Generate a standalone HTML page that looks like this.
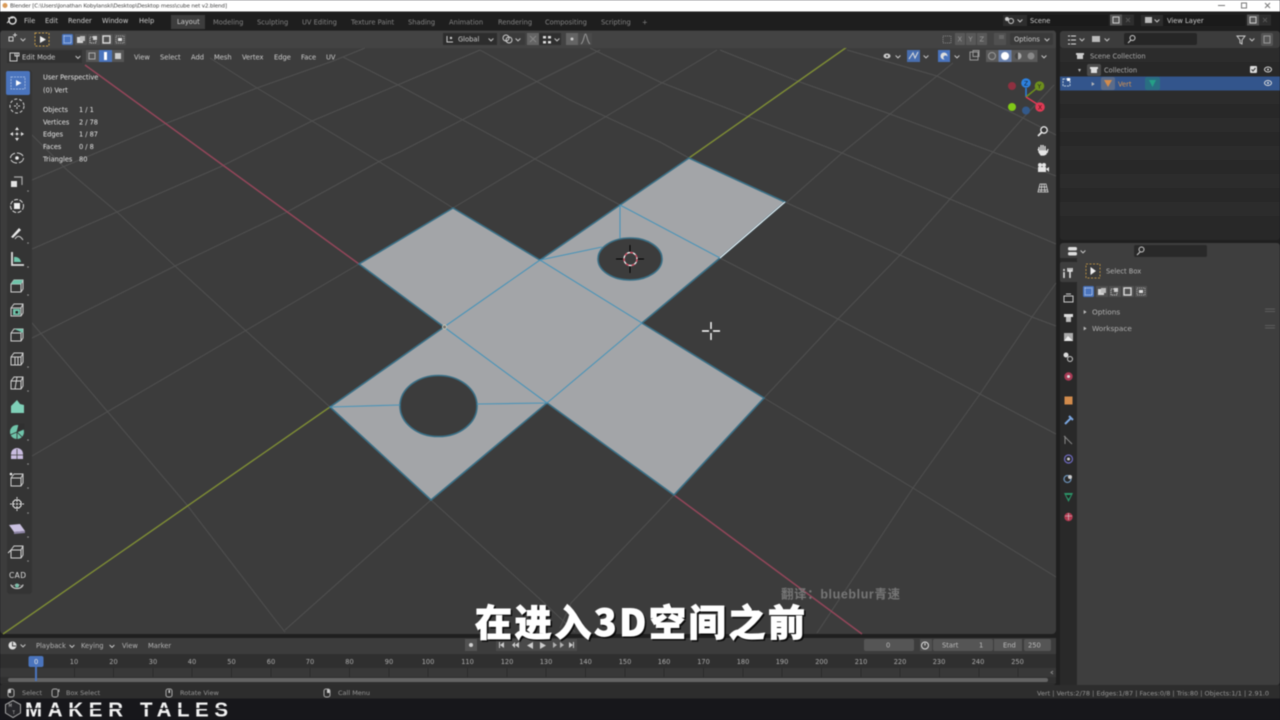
<!DOCTYPE html>
<html>
<head>
<meta charset="utf-8">
<title>Blender</title>
<style>
html,body{margin:0;padding:0;background:#17171b;width:1280px;height:720px;overflow:hidden}
svg{display:block;filter:blur(.5px)}
text{font-family:"DejaVu Sans","Liberation Sans",sans-serif;font-size:6.7px;fill:#cdcdcd}
.tab{fill:#858585}
.d{fill:#b4b4b4}
.o{fill:#e6e6e6;font-size:6.6px}
.r{fill:#acacac;font-size:6.6px;text-anchor:middle}
.s{fill:#969696;font-size:6.5px}
.g{stroke:#505050;stroke-width:1;fill:none}
.ic{fill:none;stroke:#d6d6d6;stroke-width:1}
</style>
</head>
<body>
<svg width="1280" height="720" viewBox="0 0 1280 720" xmlns="http://www.w3.org/2000/svg">
<defs>
<path id="ch" d="M-2.4-1 L0 1.4 L2.4-1" fill="none" stroke="#c4c4c4" stroke-width="1"/>
<path id="ar" d="M-1.3-2 L1.6 0 L-1.3 2Z" fill="#bbb"/>
<g id="cube"><path d="M-6-2 L-6 6 L4 6 L6 3 L6-6 L-3-6Z M-6-2 L4-2 L6-6 M4-2 L4 6" fill="none" stroke="#d0d0d0" stroke-width="1"/></g>
<g id="modes">
<rect x="0" y="0" width="11" height="11" rx="1.5" fill="#4a74bd"/>
<rect x="2" y="2" width="7" height="7" fill="none" stroke="#bcd0f0" stroke-dasharray="1 .6"/>
<rect x="13" y="0" width="12" height="11" fill="#505050"/><rect x="15" y="3" width="6" height="6" fill="#d4d4d4"/><rect x="18" y="2" width="5" height="5" fill="#bbb"/>
<rect x="26" y="0" width="12" height="11" fill="#505050"/><rect x="28" y="3" width="6" height="6" fill="none" stroke="#ccc" stroke-dasharray="1 1"/><rect x="31" y="2" width="4" height="4" fill="#ccc"/>
<rect x="39" y="0" width="12" height="11" fill="#505050"/><rect x="41" y="2" width="7" height="7" fill="none" stroke="#ddd" stroke-width="1.4"/>
<rect x="52" y="0" width="12" height="11" fill="#505050"/><rect x="54" y="2" width="8" height="7" fill="none" stroke="#aaa" stroke-dasharray="1 1"/><rect x="56" y="4" width="4" height="3" fill="#ddd"/>
</g>
<g id="hgrip"><path d="M-5-2H5M-5 0.5H5" stroke="#666" stroke-width=".8"/></g>
</defs>

<!-- base -->
<rect width="1280" height="720" fill="#1f1f1f"/>

<!-- viewport -->
<rect x="0" y="30" width="1056" height="604" rx="4" fill="#3c3c3c"/>
<g class="g">
<path d="M32 456L359 264M453 208L717 50"/>
<path d="M32 338L175 266L287 212L380 161L400 152L520 90L600 50"/>
<path d="M32 249L117 212L220 167L312 121L400 84L480 50"/>
<path d="M32 180L167 123L257 88L333 61L365 48"/>
<path d="M285 630L431 500M787 202L842 153L890 114L937 76L953 63"/>
<path d="M560 628L571 603L674 495M764 398L838 319L900 255L950 199L993 152L1023 118L1054 85"/>
<path d="M817 633L913 488L980 394L1032 317L1056 283"/>
<path d="M210 58L257 88L312 121L378 161L453 208M764 398L913 488L1056 577"/>
<path d="M32 135L67 170L117 212L175 266L245 330L330 407M431 500L541 600L575 632"/>
<path d="M32 323L107 411L187 505L277 622L285 632"/>
<path d="M343 57L400 86L620 205M720 258L838 319L980 394L1056 434"/>
<path d="M480 50L570 100L660 142L689 158M785 202L900 255L1032 317L1056 326"/>
<path d="M590 48L660 82L752 118L842 153L950 199L1056 244"/>
<path d="M720 50L800 82L890 114L993 152L1056 176"/>
<path d="M847 50L937 76L1023 118L1056 135"/>
</g>
<!-- axes -->
<path d="M85 65L359 264M674 495L862 634" stroke="#94465a" stroke-width="1.500" fill="none"/>
<path d="M3 634L330 407M689 158L847 47" stroke="#7f8e35" stroke-width="1.400" fill="none"/>

<!-- mesh -->
<path fill-rule="evenodd" fill="#a3a5a8" stroke="#396f86" stroke-width="1.600" d="M689 158L785 202L720 258L642 323L764 398L674 495L547 403L431 500L330 407L444 327L359 264L453 208L540 260L620 205Z M598 259a32 21 0 1 0 64 0a32 21 0 1 0-64 0Z M400 406a38.500 30.500 0 1 0 77 0a38.500 30.500 0 1 0-77 0Z"/>
<path d="M620 205L720 258M620 205L620 238M540 260L602 247M540 260L642 323M444 327L540 260M444 327L547 403M547 403L642 323M330 407L400 405M477 404L547 403" stroke="#4a94b8" stroke-width="1.100" fill="none"/>
<path d="M720 258L785 202" stroke="#fff" stroke-width="1"/>
<circle cx="444.500" cy="327" r="2" fill="#777" stroke="#d6d6c0" stroke-width=".8"/>
<!-- 3d cursor -->
<path d="M630 245V252M630 266V273M616 259H623M637 259H644" stroke="#000" stroke-width="1"/>
<circle cx="630.500" cy="259" r="6.500" fill="none" stroke="#fff" stroke-width="1.200"/>
<circle cx="630.500" cy="259" r="6.500" fill="none" stroke="#d8405a" stroke-width="1.200" stroke-dasharray="3 3"/>
<!-- mouse -->
<path d="M711 322V329M711 333V340M702 331H709M713 331H720" stroke="#fff" stroke-width="1.400"/>

<!-- title bar -->
<rect x="0" y="0" width="1280" height="11.500" fill="#fff"/>
<circle cx="5" cy="5.500" r="2.500" fill="#d99a58"/>
<text x="10" y="7.500" textLength="217" lengthAdjust="spacing" style="font-size:5.6px;fill:#444">Blender [C:\Users\Jonathan Kobylanski\Desktop\Desktop mess\cube net v2.blend]</text>
<path d="M1218 5.500H1225" stroke="#777"/>
<rect x="1241.500" y="3" width="5" height="5" fill="none" stroke="#777"/>
<path d="M1265 3L1270 8M1270 3L1265 8" stroke="#777"/>

<!-- topbar -->
<rect x="0" y="11.500" width="1280" height="19" fill="#1e1e1e"/>
<circle cx="12.500" cy="20.500" r="3.500" fill="none" stroke="#ddd" stroke-width="1.500"/><path d="M8 18L13 18M9 21L7 23" stroke="#ddd"/>
<text x="24" y="23">File</text><text x="45" y="23">Edit</text><text x="68" y="23">Render</text><text x="102" y="23">Window</text><text x="139" y="23">Help</text>
<rect x="171" y="15" width="34" height="14" fill="#3d3d3d"/>
<text x="177" y="24">Layout</text>
<text class="tab" x="213" y="24.500">Modeling</text><text class="tab" x="257" y="24.500">Sculpting</text><text class="tab" x="302" y="24.500">UV Editing</text><text class="tab" x="351" y="24.500">Texture Paint</text><text class="tab" x="408" y="24.500">Shading</text><text class="tab" x="449" y="24.500">Animation</text><text class="tab" x="498" y="24.500">Rendering</text><text class="tab" x="545" y="24.500">Compositing</text><text class="tab" x="601" y="24.500">Scripting</text><text class="tab" x="642" y="24.500">+</text>
<!-- scene -->
<rect x="1003" y="15" width="24" height="11" fill="#2d2d2d"/>
<circle cx="1011" cy="21" r="2.500" fill="none" stroke="#ccc"/><circle cx="1007" cy="19" r="2" fill="#ccc"/>
<use href="#ch" x="1020" y="20.500"/>
<rect x="1027" y="15" width="81" height="11" fill="#1a1a1a"/><text x="1030" y="22.800">Scene</text>
<rect x="1110" y="14.500" width="12" height="11" fill="#555"/><rect x="1113" y="17" width="6" height="6" fill="none" stroke="#ccc"/>
<rect x="1122" y="14.500" width="12" height="11" fill="#2e2e2e"/><path d="M1126 18L1130 22M1130 18L1126 22" stroke="#555"/>
<rect x="1141" y="15" width="22" height="11" fill="#2d2d2d"/><rect x="1145" y="17" width="7" height="6" fill="#bbb"/>
<use href="#ch" x="1157" y="20.500"/>
<rect x="1163" y="15" width="82" height="11" fill="#1a1a1a"/><text x="1167" y="22.800">View Layer</text>
<rect x="1247" y="14.500" width="12" height="11" fill="#555"/><rect x="1250" y="17" width="6" height="6" fill="none" stroke="#ccc"/>
<rect x="1259" y="14.500" width="12" height="11" fill="#2e2e2e"/><path d="M1263 18L1267 22M1267 18L1263 22" stroke="#555"/>

<!-- tool settings -->
<path d="M0 48V34Q0 31 3 31H1053Q1056 31 1056 34V48Z" fill="#434343"/>
<path d="M9 37H13V41H9ZM13 35L17 35M15 33V37" stroke="#ccc" fill="none"/><use href="#ch" x="23" y="39.500"/>
<rect x="35" y="33" width="14" height="13" fill="#3a3a3a" stroke="#c49a4a" stroke-dasharray="2 1.500"/><path d="M40 36L46 39.500L40 43Z" fill="#eee"/>
<use href="#modes" x="62" y="34"/>
<rect x="443" y="33" width="54" height="12" fill="#2d2d2d"/><path d="M447 36V42H453" stroke="#ccc" fill="none"/><circle cx="451" cy="38" r="1.200" fill="#ccc"/>
<text x="458" y="41.500">Global</text><use href="#ch" x="491" y="39.500"/>
<rect x="500" y="33" width="25" height="12" fill="#3a3a3a"/><circle cx="506" cy="38" r="3" fill="none" stroke="#ccc"/><circle cx="509" cy="40" r="3" fill="none" stroke="#ccc"/><use href="#ch" x="518" y="39.500"/>
<rect x="527" y="33" width="12" height="12" fill="#646464"/><path d="M530 36L536 42M536 36L530 42" stroke="#888"/>
<rect x="539" y="33" width="22" height="12" fill="#2f2f2f"/><rect x="543" y="36" width="3" height="2.500" fill="#ddd"/><rect x="548" y="36" width="3" height="2.500" fill="#ddd"/><rect x="543" y="41" width="3" height="2.500" fill="#ddd"/><rect x="548" y="41" width="3" height="2.500" fill="#ddd"/><use href="#ch" x="557" y="39.500"/>
<rect x="566" y="33" width="12" height="12" fill="#646464"/><circle cx="572" cy="39" r="1.500" fill="#ccc"/>
<rect x="578" y="33" width="14" height="12" fill="#4a4a4a"/><path d="M581 44C584 42 584 34 585.500 34C587 34 587 42 590 44" stroke="#999" fill="none"/>
<path d="M943 36H951V43H943Z" stroke="#888" stroke-dasharray="1 1" fill="none"/>
<rect x="955" y="33" width="10" height="12" fill="#585858"/><rect x="966" y="33" width="10" height="12" fill="#585858"/><rect x="977" y="33" width="10" height="12" fill="#585858"/>
<text x="957.500" y="41.500" style="fill:#999">X</text><text x="968.500" y="41.500" style="fill:#999">Y</text><text x="979.500" y="41.500" style="fill:#999">Z</text>
<rect x="994" y="33" width="12" height="12" fill="#505050"/><rect x="999" y="35" width="5" height="4" fill="#666"/>
<rect x="1010" y="33" width="43" height="12" rx="2" fill="#3a3a3a"/><text x="1014" y="41.500">Options</text><use href="#ch" x="1047" y="39.500"/>

<!-- viewport header -->
<rect x="7" y="50" width="75" height="13" fill="#303030" opacity=".9"/>
<path d="M10 53H17V61H10ZM15 53H19V56H15Z" fill="none" stroke="#ccc"/>
<text x="22" y="59.300">Edit Mode</text><use href="#ch" x="78" y="57"/>
<rect x="86" y="50" width="13" height="12" fill="#555"/><rect x="89" y="53" width="6" height="6" fill="none" stroke="#aaa"/>
<rect x="99" y="50" width="13" height="12" fill="#4a74bd"/><rect x="104" y="52" width="3" height="8" fill="#fff"/>
<rect x="112" y="50" width="12" height="12" fill="#555"/><rect x="115" y="53" width="6" height="6" fill="#ccc"/>
<text x="134" y="59.300">View</text><text x="160" y="59.300">Select</text><text x="191" y="59.300">Add</text><text x="214" y="59.300">Mesh</text><text x="242" y="59.300">Vertex</text><text x="274" y="59.300">Edge</text><text x="301" y="59.300">Face</text><text x="326" y="59.300">UV</text>

<!-- right header -->
<ellipse cx="887" cy="56" rx="3.500" ry="2.500" fill="#ccc"/><circle cx="887" cy="56" r="1" fill="#333"/><use href="#ch" x="898" y="56.500"/>
<rect x="907" y="50" width="13" height="12" fill="#486eaf"/><path d="M909 59L913 53L915 58L918 52" stroke="#ddd" fill="none"/><use href="#ch" x="926" y="56.500"/>
<rect x="938" y="50" width="12" height="12" fill="#4a74bd"/><circle cx="944" cy="56" r="3.500" fill="#ddd"/><circle cx="945.500" cy="57.500" r="2" fill="#4a74bd"/><use href="#ch" x="957" y="56.500"/>
<rect x="970" y="52" width="8" height="8" fill="none" stroke="#999"/><rect x="973" y="50.500" width="6" height="6" fill="none" stroke="#999"/>
<rect x="986" y="50" width="12.500" height="12" fill="#595959"/><circle cx="992" cy="56" r="3.500" fill="none" stroke="#999"/>
<rect x="998.500" y="50" width="13" height="12" fill="#6b82ad"/><circle cx="1005" cy="56" r="4" fill="#fff"/>
<rect x="1011.500" y="50" width="13" height="12" fill="#595959"/><circle cx="1018" cy="56" r="3.500" fill="#aaa"/><path d="M1018 52.500A3.500 3.500 0 0 0 1018 59.500Z" fill="#444"/>
<rect x="1024.500" y="50" width="13" height="12" fill="#595959"/><circle cx="1031" cy="56" r="3.500" fill="#888"/><use href="#ch" x="1044" y="56.500"/>

<!-- overlay text -->
<text class="o" x="43" y="79.500">User Perspective</text>
<text class="o" x="43" y="92.500">(0) Vert</text>
<text class="o" x="43" y="112">Objects</text><text class="o" x="79" y="112">1 / 1</text>
<text class="o" x="43" y="124.500">Vertices</text><text class="o" x="79" y="124.500">2 / 78</text>
<text class="o" x="43" y="136.500">Edges</text><text class="o" x="79" y="136.500">1 / 87</text>
<text class="o" x="43" y="149">Faces</text><text class="o" x="79" y="149">0 / 8</text>
<text class="o" x="43" y="161.500">Triangles</text><text class="o" x="79" y="161.500">80</text>

<!-- tool strip -->
<rect x="7" y="70" width="25" height="524" rx="3" fill="#303030" opacity=".7"/>
<rect x="6" y="71" width="24" height="24" rx="2" fill="#4a74bd"/>
<g transform="translate(18,83)"><rect x="-7" y="-6" width="14" height="12" fill="none" stroke="#9ab4de" stroke-dasharray="2 1"/><path d="M-2-3L3.500 0L-2 3Z" fill="#fff"/></g>
<g transform="translate(17,106)" class="ic"><circle r="7" stroke-dasharray="3 2"/><path d="M0-3V-1M0 1V3M-3 0H-1M1 0H3"/></g>
<g transform="translate(17,134)"><path d="M-6 0H6M0-6V6" stroke="#555"/><path d="M0-7L-2-4H2ZM0 7L-2 4H2ZM-7 0L-4-2V2ZM7 0L4-2V2Z" fill="#e4e4e4"/><circle r="1.200" fill="#e4e4e4"/></g>
<g transform="translate(17,158)"><ellipse rx="6.500" ry="5" fill="none" stroke="#ddd" stroke-dasharray="7 2"/><circle r="1.800" fill="#eee"/></g>
<g transform="translate(17,182)"><rect x="-6" y="-1" width="6" height="6" fill="#e4e4e4"/><path d="M-3-5H5V3" fill="none" stroke="#aaa" stroke-width="1.200"/></g>
<g transform="translate(17,206)"><circle r="6.500" fill="none" stroke="#ddd" stroke-dasharray="4 1.500"/><rect x="-3" y="-3" width="6" height="6" fill="#eee"/></g>
<g transform="translate(17,234)"><path d="M-6 3L2-6L4-4L-4 4Z" fill="#e8e8e8"/><path d="M-2 5C1 0 4 3 6 6" fill="none" stroke="#ccc"/></g>
<g transform="translate(17,259)"><path d="M-5-7V6H7" fill="none" stroke="#ddd" stroke-width="1.800"/><path d="M-3 3V-2A6 6 0 0 1 4 3Z" fill="#6fc4aa"/></g>
<g transform="translate(17,286)"><use href="#cube"/><path d="M-6-2L-3-6H6L4-2Z" fill="#6fc4aa"/></g>
<g transform="translate(17,310)"><use href="#cube"/><rect x="-4" y="-1" width="7" height="6" fill="#6fc4aa"/><rect x="-1.500" y="1" width="2.500" height="2.500" fill="#222"/></g>
<g transform="translate(17,335)"><use href="#cube"/><path d="M-3-6L6-6L6-2L2-4Z" fill="#6fc4aa"/></g>
<g transform="translate(17,359)"><use href="#cube"/><path d="M-2-2V6M1-2V6" stroke="#d0d0d0"/></g>
<g transform="translate(17,383)"><use href="#cube"/><path d="M0-6L-2 6" stroke="#d0d0d0"/></g>
<g transform="translate(17,407)"><path d="M-6 6V-1L0-7L3-3L7-2V6Z" fill="#7fd0b8"/></g>
<g transform="translate(17,432)"><circle r="7" fill="#6fc4aa"/><path d="M0 0L7-3V-8H2ZM0 0L-7 3M0 0V7M0 0L5 5" stroke="#303030" fill="#303030" stroke-width=".8"/></g>
<g transform="translate(17,455)"><path d="M-6 4V-1A6 6 0 0 1 6-1V4Z" fill="#c9bce0"/><path d="M-6 0H6M0-6V4" stroke="#444" stroke-width=".8"/></g>
<g transform="translate(17,480)"><use href="#cube"/><circle cx="-6" cy="-6" r="1.300" fill="#eee"/></g>
<g transform="translate(17,504)"><path d="M0-7V7M-7 0H7" stroke="#ddd" stroke-dasharray="2 1"/><path d="M-4-2L-2-4H2L4-2V2L2 4H-2L-4 2Z" fill="none" stroke="#eee"/></g>
<g transform="translate(17,528)"><path d="M-8-3L3-4L8 3L-3 4Z" fill="#c9c0e0"/><path d="M-3 4L8 3L8 5L-3 6Z" fill="#8c83a3"/></g>
<g transform="translate(17,552)"><use href="#cube"/><path d="M-9 1L-6-2" stroke="#ddd"/></g>
<text x="9" y="578" textLength="17" lengthAdjust="spacing" style="font-size:7.500px;fill:#ddd">CAD</text>
<g transform="translate(17,585.500)"><path d="M-6-1A6 4 0 0 0 6-1" fill="none" stroke="#ddd"/><circle r="2" fill="#6fc4aa"/><path d="M-5 1A6 4 0 0 1 5 1" fill="none" stroke="#aaa" stroke-dasharray="2 1"/></g>
<g fill="#999"><circle cx="28" cy="191" r=".8"/><circle cx="28" cy="243" r=".8"/><circle cx="28" cy="267" r=".8"/><circle cx="28" cy="295" r=".8"/><circle cx="28" cy="367" r=".8"/><circle cx="28" cy="391" r=".8"/><circle cx="28" cy="440" r=".8"/><circle cx="28" cy="464" r=".8"/><circle cx="28" cy="488" r=".8"/><circle cx="28" cy="513" r=".8"/><circle cx="28" cy="537" r=".8"/><circle cx="28" cy="561" r=".8"/></g>

<!-- gizmo -->
<path d="M1026 97V88" stroke="#2d81e0" stroke-width="1.500"/><path d="M1026 97L1037 88" stroke="#6d8f1d" stroke-width="1.500"/><path d="M1026 97L1037 104" stroke="#e03a55" stroke-width="1.500"/>
<circle cx="1012" cy="86" r="4" fill="#8f3040"/>
<circle cx="1012" cy="107" r="4" fill="#80c818"/>
<circle cx="1026" cy="110.500" r="4" fill="#33598a"/>
<circle cx="1026" cy="83" r="4.800" fill="#2d81e0"/><text x="1024" y="85.500" style="font-size:6px;fill:#123">Z</text>
<circle cx="1039.500" cy="86" r="4.800" fill="#6d8f1d"/><text x="1037.500" y="88.500" style="font-size:6px;fill:#222">Y</text>
<circle cx="1040" cy="107" r="4.800" fill="#e03a55"/><text x="1038" y="109.500" style="font-size:6px;fill:#411">X</text>
<!-- nav buttons -->
<g transform="translate(1043,131)"><circle cx="1" cy="-1" r="3.200" fill="#333" stroke="#e6e6e6" stroke-width="1.300"/><path d="M-1 1L-5 5" stroke="#e6e6e6" stroke-width="1.800"/></g>
<g transform="translate(1043,150)"><path d="M-4 1V-3M-2 1V-5M0 1V-5M2 1V-4M4 3L5-1M-4 1L-5-1M-3 1H3V4L1 5H-2L-4 2Z" stroke="#e6e6e6" stroke-width="1.300" fill="#e6e6e6"/></g>
<g transform="translate(1043,168)"><rect x="-5" y="-1" width="8" height="5" fill="#e6e6e6"/><circle cx="-3" cy="-3" r="2" fill="#e6e6e6"/><circle cx="1" cy="-3" r="2" fill="#e6e6e6"/><path d="M3 1L6-1V4Z" fill="#e6e6e6"/></g>
<g transform="translate(1043,188)"><path d="M-3-4H3L5 4H-5ZM-1-4L-2 4M1-4L2 4M-4-1H4M-4.500 2H4.500" stroke="#ddd" fill="none" stroke-width=".8"/></g>

<!-- outliner -->
<rect x="1060" y="31" width="220" height="209" rx="3" fill="#282828"/>
<g fill="#2c2c2c"><rect x="1060" y="48" width="220" height="14"/><rect x="1060" y="90" width="220" height="14"/><rect x="1060" y="118" width="220" height="14"/><rect x="1060" y="146" width="220" height="14"/><rect x="1060" y="174" width="220" height="14"/><rect x="1060" y="202" width="220" height="14"/></g>
<rect x="1060" y="31" width="220" height="17" rx="3" fill="#3c3c3c"/>
<path d="M1068 36H1070M1071 36H1076M1068 40H1070M1071 40H1076M1068 44H1070M1071 44H1076" stroke="#ddd"/><use href="#ch" x="1082" y="39.500"/>
<rect x="1092" y="36" width="8" height="6" fill="#bbb"/><use href="#ch" x="1107" y="39.500"/>
<rect x="1124" y="33" width="73" height="12" rx="2" fill="#262626"/><circle cx="1132.500" cy="38" r="2.500" fill="none" stroke="#ccc"/><path d="M1131 40L1128 43" stroke="#ccc"/>
<path d="M1237 36H1245L1242 40V44L1240 43V40Z" fill="none" stroke="#ccc"/><use href="#ch" x="1252" y="39.500"/>
<rect x="1261" y="33" width="12" height="13" rx="2" fill="#555"/><rect x="1264" y="36" width="6" height="7" fill="none" stroke="#999"/>
<rect x="1076" y="53" width="8" height="2" fill="#ccc"/><rect x="1077" y="55" width="6" height="4" fill="#ccc"/>
<text x="1090" y="58.500" style="fill:#aaa">Scene Collection</text>
<path d="M1078 69L1081 69L1079.500 72Z" fill="#bbb"/>
<rect x="1087" y="64" width="14" height="12" rx="2" fill="#4c4c4c"/><rect x="1090" y="67" width="8" height="2" fill="#ddd"/><rect x="1091" y="69" width="6" height="4" fill="#ddd"/>
<text x="1104" y="72.500" style="fill:#b0b0b0">Collection</text>
<rect x="1250" y="66" width="7" height="7" rx="1" fill="#ddd"/><path d="M1251.500 69.500L1253 71L1255.500 68" stroke="#333" fill="none"/>
<ellipse cx="1268" cy="69.500" rx="3.500" ry="2.500" fill="none" stroke="#ddd"/><circle cx="1268" cy="69.500" r="1" fill="#ddd"/>
<rect x="1060" y="76.500" width="220" height="14" fill="#33558c"/>
<rect x="1063" y="79" width="7" height="7" fill="none" stroke="#bcd" stroke-dasharray="2 1"/><rect x="1067" y="78" width="3" height="3" fill="#fff"/>
<use href="#ar" x="1093" y="84"/>
<rect x="1101" y="77" width="14" height="13" rx="2" fill="#5b6c8a"/><path d="M1104 80H1112L1108 87Z" fill="#d28b4c"/>
<text x="1118" y="86.500" style="fill:#d9954f">Vert</text>
<rect x="1145" y="77" width="15" height="13" rx="2" fill="#2a6e82"/><path d="M1149 80H1156L1152.500 87Z" fill="#25a086"/>
<ellipse cx="1268" cy="83" rx="3.500" ry="2.500" fill="none" stroke="#ddd"/><circle cx="1268" cy="83" r="1" fill="#ddd"/>

<!-- properties -->
<rect x="1060" y="243" width="220" height="442" rx="3" fill="#3e3e3e"/>
<rect x="1060" y="258" width="17" height="427" fill="#292929"/>
<rect x="1060" y="262" width="18" height="20" rx="2" fill="#3e3e3e"/>
<rect x="1068" y="247" width="9" height="3.500" rx="1.500" fill="#ddd"/><rect x="1068" y="252" width="9" height="3.500" rx="1.500" fill="#ddd"/><use href="#ch" x="1083" y="251.500"/>
<rect x="1134" y="245" width="73" height="12" rx="2" fill="#292929"/><circle cx="1141.500" cy="249.500" r="2.500" fill="none" stroke="#ccc"/><path d="M1140 252L1137 255" stroke="#ccc"/>
<g transform="translate(1068,273)"><path d="M-4-1V5M-4-4V-2M2-5L2 5M0-5V-2H4V-5" stroke="#e4e4e4" stroke-width="1.500" fill="none"/></g>
<rect x="1064" y="296" width="9" height="6" fill="none" stroke="#ccc"/><path d="M1066 294H1071" stroke="#ccc"/>
<rect x="1064" y="314" width="9" height="3" fill="#ddd"/><rect x="1066" y="317" width="5" height="5" fill="#bbb"/>
<rect x="1064" y="333" width="9" height="8" fill="#aaa"/><path d="M1064 341L1068 336L1073 341Z" fill="#eee"/>
<circle cx="1066" cy="355" r="2.500" fill="#ddd"/><circle cx="1070" cy="359" r="2.500" fill="none" stroke="#ccc"/>
<circle cx="1068.500" cy="376.500" r="4.200" fill="#a83a55"/><circle cx="1068.500" cy="376.500" r="1.500" fill="#ddd"/>
<rect x="1064.500" y="396.500" width="8" height="8" fill="#d28b4c"/>
<path d="M1065 424L1071 418M1069 416L1073 420" stroke="#7aa5df" stroke-width="2"/>
<path d="M1064 436L1072 444M1065 436V444" stroke="#888" stroke-width="1" fill="none"/>
<circle cx="1068.500" cy="459" r="4" fill="none" stroke="#6e6ac0" stroke-width="1.200"/><circle cx="1068.500" cy="459" r="1.500" fill="#ccc"/>
<circle cx="1067.500" cy="479" r="3.500" fill="none" stroke="#6a8fb5" stroke-width="1.300"/><circle cx="1070" cy="477" r="2" fill="#ccc"/>
<path d="M1064 493H1073L1068.500 502Z" fill="#2c9468"/><path d="M1066 495H1071L1068.500 499Z" fill="#222"/>
<circle cx="1068.500" cy="517" r="4.200" fill="#b0384f"/><path d="M1065 516H1072M1068.500 513V520" stroke="#ddd" stroke-width=".6"/>
<rect x="1086" y="264" width="14" height="14" fill="#3a3a3a" stroke="#b08a44" stroke-dasharray="2 1.500"/><path d="M1090.500 267L1096 271L1090.500 275Z" fill="#eee"/>
<text x="1106" y="273.500" style="fill:#b4b4b4">Select Box</text>
<use href="#modes" x="1083" y="286"/>
<use href="#ar" x="1085" y="312"/><text x="1092" y="314.500" style="fill:#b0b0b0;font-size:7.300px">Options</text>
<use href="#ar" x="1085" y="328.500"/><text x="1092" y="331" style="fill:#b0b0b0;font-size:7.300px">Workspace</text>
<use href="#hgrip" x="1270" y="311"/><use href="#hgrip" x="1270" y="327.500"/>

<!-- timeline -->
<rect x="0" y="638" width="1056" height="47" rx="3" fill="#2e2e2e"/>
<rect x="0" y="638" width="1056" height="16" fill="#3c3c3c"/>
<circle cx="12.500" cy="645.500" r="4" fill="#ddd"/><path d="M12.500 642V646H16" stroke="#444" fill="none"/><use href="#ch" x="23" y="645.500"/>
<text class="d" x="36" y="648">Playback</text><use href="#ch" x="72" y="646"/>
<text class="d" x="81" y="648">Keying</text><use href="#ch" x="112" y="646"/>
<text class="d" x="122" y="648">View</text><text class="d" x="148" y="648">Marker</text>
<rect x="465" y="639" width="12" height="12" fill="#525252"/><circle cx="471" cy="645" r="2" fill="#d0d0d0"/>
<rect x="496" y="639" width="81" height="12" fill="#4a4a4a"/>
<g fill="#ccc"><path d="M504 642L500 645L504 648Z"/><rect x="499" y="642" width="1" height="6"/><path d="M515 645L519 642V648ZM512 645L515 642V648Z"/><path d="M533 642L527 645.500L533 649Z"/><path d="M540 642L546 645.500L540 649Z"/><path d="M553 642L557 645L553 648ZM560 642L564 645L560 648Z" opacity=".8"/><path d="M569 642L573 645L569 648Z"/><rect x="573" y="642" width="1" height="6"/></g>
<rect x="864" y="639" width="50" height="12" rx="2" fill="#555"/><text x="886" y="647.500" style="fill:#bbb">0</text>
<rect x="920" y="639" width="12" height="12" fill="#505050"/><circle cx="925" cy="645.500" r="3.500" fill="none" stroke="#ddd"/><path d="M925 645.500V643" stroke="#ddd"/>
<rect x="933" y="639" width="60" height="12" rx="2" fill="#555"/><rect x="994" y="639" width="28" height="12" fill="#555"/><rect x="1024" y="639" width="27" height="12" rx="2" fill="#555"/>
<text x="942" y="647.500" style="fill:#bbb">Start</text><text x="979" y="647.500" style="fill:#bbb">1</text><text x="1003" y="647.500" style="fill:#bbb">End</text><text x="1028" y="647.500" style="fill:#bbb">250</text>
<rect x="0" y="654" width="1056" height="14" fill="#2f2f2f"/>
<rect x="0" y="668" width="1056" height="9" fill="#383838"/>
<rect x="0" y="677" width="1056" height="6" fill="#303030"/>
<rect x="8" y="678" width="1040" height="4" rx="2" fill="#646464"/>
<path stroke="#2b2b2b" d="M74.500 668V677M113.500 668V677M153 668V677M192 668V677M231.500 668V677M271 668V677M310 668V677M349.500 668V677M389 668V677M428 668V677M467.500 668V677M507 668V677M546 668V677M585.500 668V677M625 668V677M664 668V677M703.500 668V677M743 668V677M782 668V677M821.500 668V677M861 668V677M900 668V677M939.500 668V677M979 668V677M1018 668V677"/>
<text class="r" x="74" y="664">10</text><text class="r" x="113.500" y="664">20</text><text class="r" x="153" y="664">30</text><text class="r" x="192" y="664">40</text><text class="r" x="231.500" y="664">50</text><text class="r" x="271" y="664">60</text><text class="r" x="310" y="664">70</text><text class="r" x="349.500" y="664">80</text><text class="r" x="389" y="664">90</text><text class="r" x="428" y="664">100</text><text class="r" x="467.500" y="664">110</text><text class="r" x="507" y="664">120</text><text class="r" x="546" y="664">130</text><text class="r" x="585.500" y="664">140</text><text class="r" x="625" y="664">150</text><text class="r" x="664" y="664">160</text><text class="r" x="703.500" y="664">170</text><text class="r" x="743" y="664">180</text><text class="r" x="782" y="664">190</text><text class="r" x="821.500" y="664">200</text><text class="r" x="861" y="664">210</text><text class="r" x="900" y="664">220</text><text class="r" x="939" y="664">230</text><text class="r" x="978" y="664">240</text><text class="r" x="1017.500" y="664">250</text>
<path d="M36 667V681" stroke="#4a74bd" stroke-width="2"/>
<rect x="28.500" y="656" width="15" height="11" rx="2" fill="#4a74bd"/><text x="34" y="664" style="fill:#e8e8e8">0</text>
<path d="M1053 671L1051 672.500L1053 674" stroke="#888" fill="none"/>

<!-- status bar -->
<rect x="0" y="685" width="1280" height="13.500" fill="#2d2d2d"/>
<rect x="8" y="689" width="6" height="8" rx="2" fill="none" stroke="#aaa"/><rect x="8.500" y="689.500" width="2.500" height="3.500" fill="#ccc"/>
<text class="s" x="22" y="695">Select</text>
<rect x="52" y="689" width="6" height="8" rx="2" fill="none" stroke="#aaa"/><path d="M59 689V692" stroke="#aaa"/>
<text class="s" x="66" y="695">Box Select</text>
<rect x="166" y="689" width="6" height="8" rx="2" fill="none" stroke="#aaa"/><rect x="168.500" y="690" width="1.500" height="3" fill="#ccc"/>
<text class="s" x="180" y="695">Rotate View</text>
<rect x="324" y="689" width="6" height="8" rx="2" fill="none" stroke="#aaa"/><rect x="327" y="689.500" width="2.500" height="3.500" fill="#ccc"/>
<text class="s" x="338" y="695">Call Menu</text>
<text class="s" x="1037" y="695.500" textLength="232" lengthAdjust="spacing">Vert | Verts:2/78 | Edges:1/87 | Faces:0/8 | Tris:80 | Objects:1/1 | 2.91.0</text>

<!-- bottom brand -->
<rect x="0" y="698.500" width="1280" height="21.500" fill="#17171b"/>
<path d="M13 700.500L20.500 704.500V713L13 717.500L5.500 713V704.500Z" fill="#26262a" stroke="#a8a8a8" stroke-width="1"/>
<text x="8.500" y="707" style="font-size:4px;fill:#ccc">M</text><text x="12.500" y="714" style="font-size:4px;fill:#ccc">T</text>
<text x="25" y="716.500" textLength="98" lengthAdjust="spacing" style="font-family:'Liberation Sans',sans-serif;font-size:20.500px;font-weight:bold;fill:#f2f2f2">MAKER</text>
<text x="140" y="716.500" textLength="88" lengthAdjust="spacing" style="font-family:'Liberation Sans',sans-serif;font-size:20.500px;font-weight:bold;fill:#f2f2f2">TALES</text>
<path d="M24 708.500H230" stroke="#17171b" stroke-width="1"/>

<!-- watermark -->
<text x="781" y="598.500" textLength="119" lengthAdjust="spacing" style="font-family:'Liberation Sans','Noto Sans CJK SC',sans-serif;font-size:12.500px;font-weight:bold;fill:#767676">翻译：blueblur青速</text>

<!-- subtitle -->
<text x="476.500" y="637.500" textLength="330" lengthAdjust="spacing" style="font-family:'Noto Sans CJK SC','Liberation Sans',sans-serif;font-size:37px;font-weight:900;fill:#000;stroke:#000;stroke-width:1px;opacity:.8">在进入3D空间之前</text>
<text x="475" y="636" textLength="330" lengthAdjust="spacing" style="font-family:'Noto Sans CJK SC','Liberation Sans',sans-serif;font-size:37px;font-weight:900;fill:#fff;stroke:#fff;stroke-width:.9px">在进入3D空间之前</text>
</svg>
</body>
</html>
